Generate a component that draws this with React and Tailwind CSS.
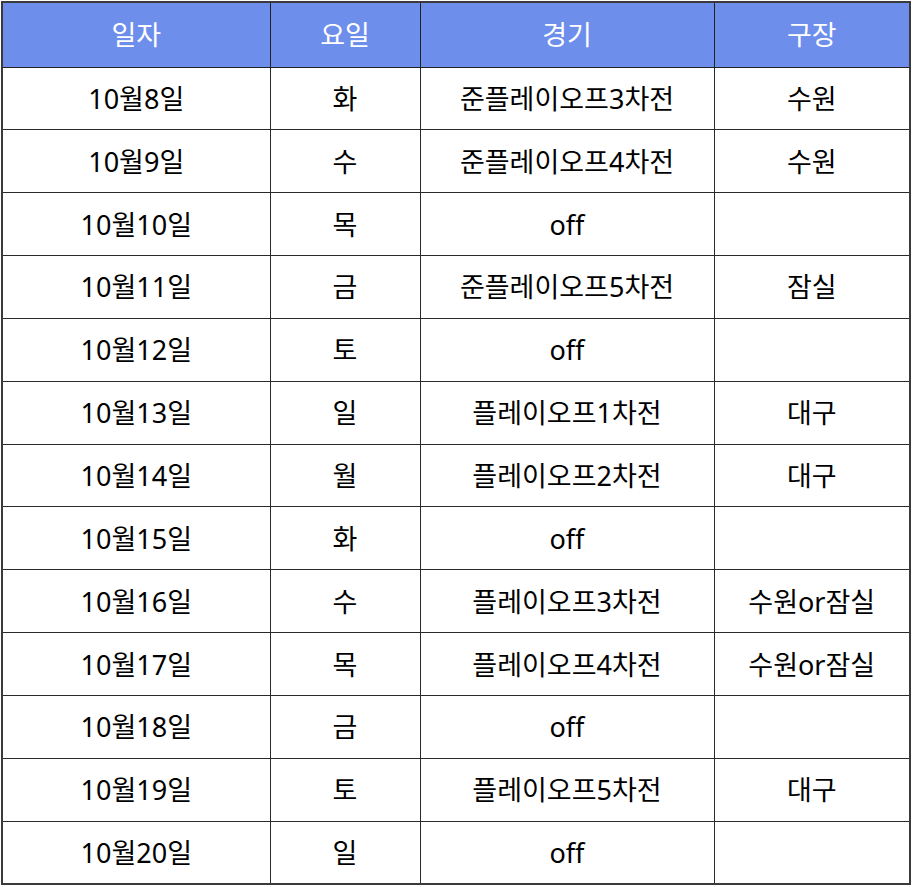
import React from "react";

const rows = [
  ["10월8일", "화", "준플레이오프3차전", "수원"],
  ["10월9일", "수", "준플레이오프4차전", "수원"],
  ["10월10일", "목", "off", ""],
  ["10월11일", "금", "준플레이오프5차전", "잠실"],
  ["10월12일", "토", "off", ""],
  ["10월13일", "일", "플레이오프1차전", "대구"],
  ["10월14일", "월", "플레이오프2차전", "대구"],
  ["10월15일", "화", "off", ""],
  ["10월16일", "수", "플레이오프3차전", "수원or잠실"],
  ["10월17일", "목", "플레이오프4차전", "수원or잠실"],
  ["10월18일", "금", "off", ""],
  ["10월19일", "토", "플레이오프5차전", "대구"],
  ["10월20일", "일", "off", ""],
];

export default function App() {
  return (
    <div
      className="w-[916px] h-[887px] bg-white pl-px pt-px"
      style={{ fontFamily: '"Noto Sans", "Noto Sans CJK KR", sans-serif' }}
    >
      <table className="border-collapse table-fixed w-[908px] border-2 border-[#3a3a3a] text-[27px] text-black">
        <colgroup>
          <col className="w-[268px]" />
          <col className="w-[150px]" />
          <col className="w-[294px]" />
          <col className="w-[196px]" />
        </colgroup>
        <thead>
          <tr className="h-[65px] bg-[#6e8eec] text-white">
            {["일자", "요일", "경기", "구장"].map((h) => (
              <th key={h} className="border border-[#222] font-normal text-center align-middle p-0 leading-none">
                {h}
              </th>
            ))}
          </tr>
        </thead>
        <tbody>
          {rows.map((r, i) => (
            <tr key={i} className="h-[62.85px]">
              {r.map((c, j) => (
                <td key={j} className="border border-[#2a2a2a] text-center align-middle p-0 leading-none">
                  {c}
                </td>
              ))}
            </tr>
          ))}
        </tbody>
      </table>
    </div>
  );
}
